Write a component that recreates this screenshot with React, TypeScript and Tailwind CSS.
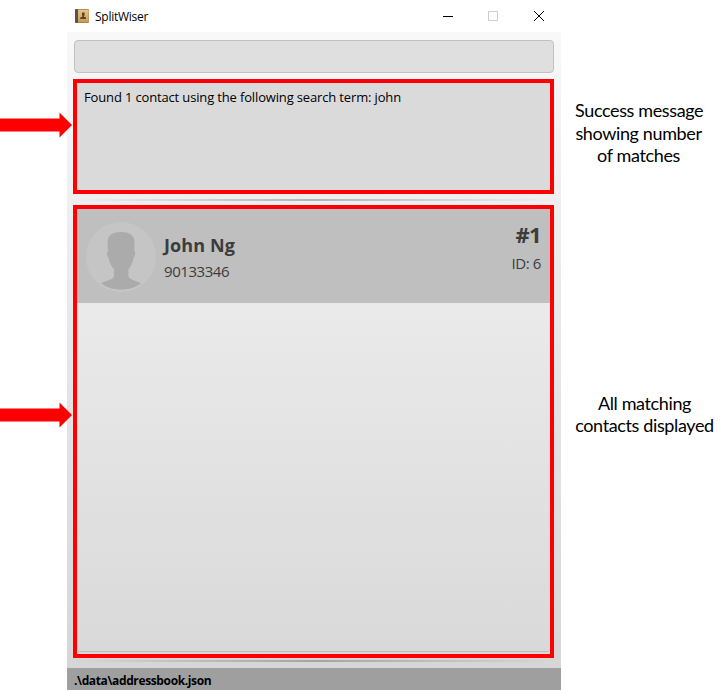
import React from "react";

function Arrow() {
  return (
    <svg className="relative z-10 block h-[26px] w-[73px] shrink-0" viewBox="0 0 73 26">
      <path d="M0 6.5H59.5V0.5L72 13L59.5 25.5V19.5H0Z" fill="#ff0000" />
    </svg>
  );
}

function AppIcon() {
  return (
    <svg className="block h-[14px] w-[14px]" viewBox="0 0 14 14">
      <defs>
        <linearGradient id="cover" x1="0" y1="0" x2="0" y2="1">
          <stop offset="0" stopColor="#e6c58c" />
          <stop offset="1" stopColor="#cf9d55" />
        </linearGradient>
      </defs>
      <rect width="14" height="14" rx="1" fill="#a98550" />
      <rect width="3" height="14" rx="1" fill="#5d5348" />
      <rect x="3" y="0.8" width="10.6" height="12" fill="url(#cover)" />
      <path d="M7 3.500h2.600v3H9v1.300l2 .8v1.400H5.200V8.600l2.200-.8V6.500H7Z" fill="#5b4324" />
    </svg>
  );
}

function TitleBar() {
  return (
    <header className="flex h-8 items-center bg-white pl-2">
      <AppIcon />
      <span className="ml-[6px] pt-px text-[12px] leading-4 tracking-[-0.25px] text-black">SplitWiser</span>
      <svg className="ml-auto block h-8 w-[138px]" viewBox="0 0 138 32" fill="none" shapeRendering="crispEdges">
        <path d="M20 16.500h10" stroke="#000" />
        <rect x="65.500" y="11.500" width="9" height="9" stroke="#ccc" />
        <path d="M111 11l10 10M121 11l-10 10" stroke="#000" shapeRendering="auto" />
      </svg>
    </header>
  );
}

function Avatar() {
  return (
    <svg className="block h-[70px] w-[70px] shrink-0" viewBox="0 0 70 70">
      <circle cx="35" cy="35" r="35" fill="#c5c5c5" />
      <path
        d="M35 10C45 10 48.500 14 48.500 21L48.300 29C50 29.500 49 34.500 47.500 36C46.500 41 45 44 42.500 47.500V54C43 58 50 58.500 55 61C50 65.500 43 67.500 35 67.500S20 65.500 15 61C20 58.500 27.500 58 28 54V47.500C25.500 44 23.500 41 22.500 36C21 34.500 20.500 29.500 22 29L21.500 21C21.500 14 25 10 35 10Z"
        fill="#ababab"
      />
    </svg>
  );
}

export default function App() {
  return (
    <main className="flex h-[690px] w-[722px] overflow-hidden bg-white font-['Open_Sans','Noto_Sans',sans-serif]">
      <aside className="flex w-[67px] shrink-0 flex-col gap-[264px] pt-[112px]">
        <Arrow />
        <Arrow />
      </aside>

      <section className="flex w-[494px] shrink-0 flex-col">
        <TitleBar />
        <div className="flex h-[636px] flex-col bg-linear-to-b from-[#f8f8f8] to-[#d6d6d6] pt-2 pr-[7px] pl-[6px]">
          <div className="ml-px h-[33px] rounded-[4px] border border-[#c1c1c1] bg-[#dfdfdf]" />
          <div className="mt-[6px] h-[115px] border-4 border-[#ff0000] bg-[#dadada] pt-[6px] pl-[7px]">
            <p className="text-[13px] leading-4 tracking-[-0.15px] whitespace-nowrap text-black">
              Found 1 contact using the following search term: john
            </p>
          </div>
          <div className="mt-[5px] h-[2px] bg-linear-to-r from-transparent via-[#b4b4b4] to-transparent" />
          <div className="mt-1 flex h-[453px] flex-col border-4 border-[#ff0000] bg-linear-to-b from-[#efefef] to-[#d9d9d9]">
            <div className="flex h-[94px] shrink-0 items-start bg-[#bfbfbf] pt-[13px] pr-[9px] pl-[9px] text-[#3c3c3c]">
              <Avatar />
              <div className="ml-2 pt-[11px] whitespace-nowrap">
                <div className="text-[18px] leading-6 font-bold tracking-[0.1px]">John Ng</div>
                <div className="mt-[2px] text-[15px] leading-6 tracking-[-0.45px]">90133346</div>
              </div>
              <div className="-mt-px ml-auto text-right whitespace-nowrap">
                <div className="text-[22px] leading-[26px] font-bold tracking-[-0.6px]">#1</div>
                <div className="mt-1 text-[15px] leading-6 tracking-[-0.4px]">ID: 6</div>
              </div>
            </div>
            <div className="flex-1" />
            <div className="mb-[2px] h-[3px] shrink-0 rounded-b-[3px] border-b border-[#bcbcbc]" />
          </div>
          <div className="mt-[2px] h-[2px] bg-linear-to-r from-transparent via-[#a4a4a4] to-transparent" />
        </div>
        <footer className="flex h-[22px] items-center bg-[#9f9f9f] pt-[3px] pl-[7px] text-[12px] leading-4 font-bold tracking-[-0.37px] text-black">
          {".\\data\\addressbook.json"}
        </footer>
      </section>

      <aside className="flex flex-1 flex-col pt-[99px] pl-[14px] font-['Lato','Open_Sans',sans-serif] text-[18px] leading-[22.500px] tracking-[-0.37px] whitespace-nowrap text-black">
        <p className="w-[127px] text-center">
          Success message
          <br />
          showing number
          <br />
          of matches
        </p>
        <p className="mt-[225px] w-[139px] text-center">
          All matching
          <br />
          contacts displayed
        </p>
      </aside>
    </main>
  );
}
